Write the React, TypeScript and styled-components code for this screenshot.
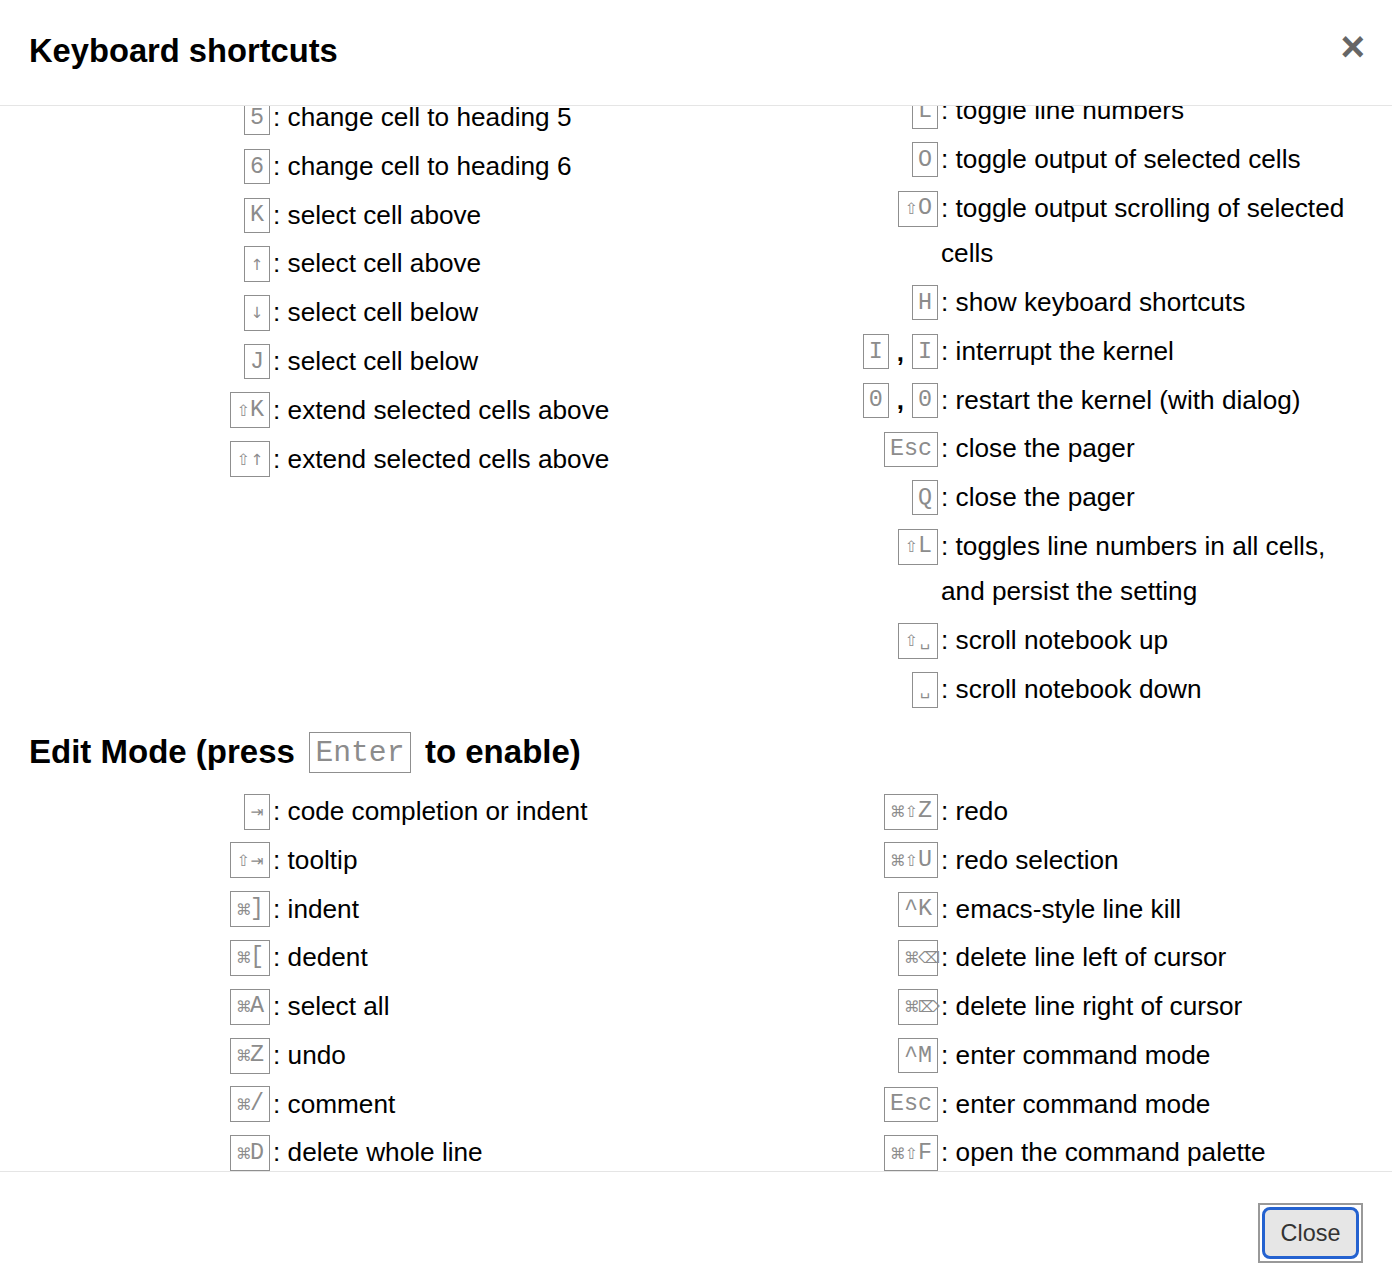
import React, { useLayoutEffect, useRef } from "react";
import styled, { createGlobalStyle } from "styled-components";

const GlobalStyle = createGlobalStyle`
  html, body { margin: 0; padding: 0; height: 100%; background: #fff; }
  body { font-family: "Liberation Sans", Arial, Helvetica, sans-serif; color: #000; }
  #root { height: 100%; }
  *, *::before, *::after { box-sizing: border-box; }
`;

const Dialog = styled.div`
  height: 100vh;
  display: flex;
  flex-direction: column;
  background: #fff;
`;

const Header = styled.header`
  flex: none;
  height: 106px;
  border-bottom: 1px solid #e5e5e5;
  display: flex;
  align-items: center;
  justify-content: space-between;
  padding: 0 27px 3px 29px;
`;

const Title = styled.h1`
  margin: 0;
  font-size: 32.7px;
  font-weight: 700;
  line-height: 40px;
`;

const CloseX = styled.button`
  align-self: flex-start;
  margin-top: 26px;
  border: 0;
  background: none;
  padding: 0;
  font: 700 42px/1 "Liberation Sans", Arial, sans-serif;
  color: #666;
  cursor: pointer;
`;

const Body = styled.div`
  flex: 1;
  min-height: 0;
  overflow-y: auto;
  scrollbar-width: none;
  padding: 0 25px 28px 29px;
  &::-webkit-scrollbar { display: none; }
`;

const Intro = styled.p`
  margin: 24px 0 20px;
  font-size: 26px;
  line-height: 40px;
`;

const ModifierList = styled.div`
  display: flex;
  flex-wrap: wrap;
  gap: 8px 28px;
  font-size: 26px;
  line-height: 40px;
  margin-bottom: 10px;
`;

const SectionTitle = styled.h2`
  display: flex;
  align-items: center;
  gap: 14px;
  height: 41px;
  margin: 17.6px 0 14.6px;
  font-size: 33px;
  font-weight: 700;
  white-space: nowrap;
`;

const EditButton = styled.button`
  margin-left: auto;
  font: 400 23.4px "Liberation Sans", Arial, sans-serif;
  color: #333;
  background: #fff;
  border: 1px solid #ccc;
  border-radius: 4px;
  padding: 8px 20px;
`;

const Columns = styled.div`
  display: grid;
  grid-template-columns: 668px 1fr;
`;

const Column = styled.div`
  min-width: 0;
`;

const Row = styled.div`
  display: flex;
  align-items: flex-start;
  padding: 1.7px 0;
`;

const Keys = styled.div`
  flex: none;
  width: 241px;
  height: 45.4px;
  display: flex;
  align-items: center;
  justify-content: flex-end;
`;

const Desc = styled.div`
  flex: 1;
  min-width: 0;
  padding-left: 3px;
  font-size: 26.2px;
  line-height: 45.4px;
`;

const Kbd = styled.kbd<{ $big?: boolean }>`
  display: inline-block;
  border: 1px solid #8f8f8f;
  border-radius: 0;
  background: #fff;
  color: #8c8c8c;
  font-family: "Liberation Mono", "Courier New", monospace;
  font-weight: 400;
  font-size: ${(p) => (p.$big ? "29.7px" : "23.4px")};
  line-height: ${(p) => (p.$big ? "37px" : "25.5px")};
  padding: ${(p) => (p.$big ? "2px 5.5px 0" : "4.5px 5px 3px")};
  white-space: nowrap;
`;

const Sym = styled.span`
  display: inline-block;
  width: 14.04px;
  text-align: center;
  font-family: "DejaVu Sans", sans-serif;
  font-size: 15.5px;
  color: #8c8c8c;
`;

const Sep = styled.span`
  margin: 0 8px;
  font-size: 26px;
  font-weight: 700;
  line-height: 26px;
  color: #000;
`;

const Footer = styled.footer`
  flex: none;
  height: 114px;
  border-top: 1px solid #e5e5e5;
  display: flex;
  justify-content: flex-end;
  align-items: flex-start;
  padding: 31px 29px 0;
`;

const CloseButton = styled.button`
  padding: 2px;
  border: 2px solid #999;
  border-radius: 0;
  background: #fff;
  cursor: pointer;
  font: inherit;
`;

const ButtonFace = styled.span`
  display: block;
  width: 97px;
  height: 52px;
  border: 3px solid #2462d0;
  border-radius: 8px;
  background: #e6e6e6;
  color: #333;
  font-family: "Liberation Sans", Arial, sans-serif;
  font-size: 23.4px;
  line-height: 46px;
  text-align: center;
`;

type Shortcut = { keys: string[]; desc: string };

const sc = (keys: string | string[], desc: string): Shortcut => ({
  keys: Array.isArray(keys) ? keys : [keys],
  desc,
});

const commandLeft: Shortcut[] = [
  sc("F", "find and replace"),
  sc("↩", "enter edit mode"),
  sc("⌘⇧F", "open the command palette"),
  sc("⌘⇧P", "open the command palette"),
  sc("P", "open the command palette"),
  sc("⇧↩", "run cell, select below"),
  sc("⌃↩", "run selected cells"),
  sc("⌥↩", "run cell and insert below"),
  sc("Y", "change cell to code"),
  sc("M", "change cell to markdown"),
  sc("R", "change cell to raw"),
  sc("1", "change cell to heading 1"),
  sc("2", "change cell to heading 2"),
  sc("3", "change cell to heading 3"),
  sc("4", "change cell to heading 4"),
  sc("5", "change cell to heading 5"),
  sc("6", "change cell to heading 6"),
  sc("K", "select cell above"),
  sc("↑", "select cell above"),
  sc("↓", "select cell below"),
  sc("J", "select cell below"),
  sc("⇧K", "extend selected cells above"),
  sc("⇧↑", "extend selected cells above"),
];

const commandRight: Shortcut[] = [
  sc("⇧↓", "extend selected cells below"),
  sc("⇧J", "extend selected cells below"),
  sc("A", "insert cell above"),
  sc("B", "insert cell below"),
  sc("X", "cut selected cells"),
  sc("C", "copy selected cells"),
  sc("⇧V", "paste cells above"),
  sc("V", "paste cells below"),
  sc("Z", "undo cell deletion"),
  sc(["D", "D"], "delete selected cells"),
  sc("⇧M", "merge selected cells, or current cell with cell below if only one cell is selected"),
  sc("⌘S", "Save and Checkpoint"),
  sc("S", "Save and Checkpoint"),
  sc("L", "toggle line numbers"),
  sc("O", "toggle output of selected cells"),
  sc("⇧O", "toggle output scrolling of selected cells"),
  sc("H", "show keyboard shortcuts"),
  sc(["I", "I"], "interrupt the kernel"),
  sc(["0", "0"], "restart the kernel (with dialog)"),
  sc("Esc", "close the pager"),
  sc("Q", "close the pager"),
  sc("⇧L", "toggles line numbers in all cells, and persist the setting"),
  sc("⇧␣", "scroll notebook up"),
  sc("␣", "scroll notebook down"),
];

const editLeft: Shortcut[] = [
  sc("⇥", "code completion or indent"),
  sc("⇧⇥", "tooltip"),
  sc("⌘]", "indent"),
  sc("⌘[", "dedent"),
  sc("⌘A", "select all"),
  sc("⌘Z", "undo"),
  sc("⌘/", "comment"),
  sc("⌘D", "delete whole line"),
  sc("⌘U", "undo selection"),
  sc("Insert", "toggle overwrite flag"),
  sc("⌘↑", "go to cell start"),
  sc("⌘↓", "go to cell end"),
  sc("⌥←", "go one word left"),
  sc("⌥→", "go one word right"),
  sc("⌥⌫", "delete word before"),
  sc("⌥⌦", "delete word after"),
];

const editRight: Shortcut[] = [
  sc("⌘⇧Z", "redo"),
  sc("⌘⇧U", "redo selection"),
  sc("^K", "emacs-style line kill"),
  sc("⌘⌫", "delete line left of cursor"),
  sc("⌘⌦", "delete line right of cursor"),
  sc("^M", "enter command mode"),
  sc("Esc", "enter command mode"),
  sc("⌘⇧F", "open the command palette"),
  sc("⌘⇧P", "open the command palette"),
  sc("⇧↩", "run cell, select below"),
  sc("⌃↩", "run selected cells"),
  sc("⌥↩", "run cell and insert below"),
  sc("⌃⇧-", "split cell at cursor"),
  sc("⌘S", "Save and Checkpoint"),
  sc("↓", "move cursor down"),
  sc("↑", "move cursor up"),
];

function KeyCombo({ combo, big }: { combo: string; big?: boolean }) {
  const parts: React.ReactNode[] = [];
  let buf = "";
  Array.from(combo).forEach((ch, i) => {
    if (ch.charCodeAt(0) < 128) {
      buf += ch;
    } else {
      if (buf) {
        parts.push(buf);
        buf = "";
      }
      parts.push(<Sym key={i}>{ch}</Sym>);
    }
  });
  if (buf) parts.push(buf);
  return <Kbd $big={big}>{parts}</Kbd>;
}

function ShortcutRow({ item }: { item: Shortcut }) {
  return (
    <Row>
      <Keys>
        {item.keys.map((k, i) => (
          <React.Fragment key={i}>
            {i > 0 && <Sep>,</Sep>}
            <KeyCombo combo={k} />
          </React.Fragment>
        ))}
      </Keys>
      <Desc>: {item.desc}</Desc>
    </Row>
  );
}

function ShortcutColumns({ left, right }: { left: Shortcut[]; right: Shortcut[] }) {
  return (
    <Columns>
      <Column>
        {left.map((s, i) => (
          <ShortcutRow key={i} item={s} />
        ))}
      </Column>
      <Column>
        {right.map((s, i) => (
          <ShortcutRow key={i} item={s} />
        ))}
      </Column>
    </Columns>
  );
}

export default function App() {
  const bodyRef = useRef<HTMLDivElement>(null);
  const anchorRef = useRef<HTMLHeadingElement>(null);

  useLayoutEffect(() => {
    const body = bodyRef.current;
    const anchor = anchorRef.current;
    if (!body || !anchor) return;
    const offset =
      anchor.getBoundingClientRect().top - body.getBoundingClientRect().top + body.scrollTop;
    body.scrollTop = offset - 626;
  }, []);

  return (
    <>
      <GlobalStyle />
      <Dialog role="dialog" aria-label="Keyboard shortcuts">
        <Header>
          <Title>Keyboard shortcuts</Title>
          <CloseX aria-label="Close">×</CloseX>
        </Header>
        <Body ref={bodyRef}>
          <Intro>
            The Jupyter Notebook has two different keyboard input modes. Edit mode allows you to
            type code or text into a cell and is indicated by a green cell border. Command mode
            binds the keyboard to notebook level commands and is indicated by a grey cell border
            with a blue left margin.
          </Intro>
          <ModifierList>
            <span>Mac OS modifier keys:</span>
            <span><KeyCombo combo="⌘" /> : Command</span>
            <span><KeyCombo combo="⌃" /> : Control</span>
            <span><KeyCombo combo="⌥" /> : Option</span>
            <span><KeyCombo combo="⇧" /> : Shift</span>
            <span><KeyCombo combo="↩" /> : Return</span>
            <span><KeyCombo combo="␣" /> : Space</span>
            <span><KeyCombo combo="⇥" /> : Tab</span>
          </ModifierList>
          <SectionTitle>
            <span>Command Mode (press</span>
            <KeyCombo combo="Esc" big />
            <span>to enable)</span>
            <EditButton>Edit Shortcuts</EditButton>
          </SectionTitle>
          <ShortcutColumns left={commandLeft} right={commandRight} />
          <SectionTitle ref={anchorRef}>
            <span>Edit Mode (press</span>
            <KeyCombo combo="Enter" big />
            <span>to enable)</span>
          </SectionTitle>
          <ShortcutColumns left={editLeft} right={editRight} />
        </Body>
        <Footer>
          <CloseButton>
            <ButtonFace>Close</ButtonFace>
          </CloseButton>
        </Footer>
      </Dialog>
    </>
  );
}
